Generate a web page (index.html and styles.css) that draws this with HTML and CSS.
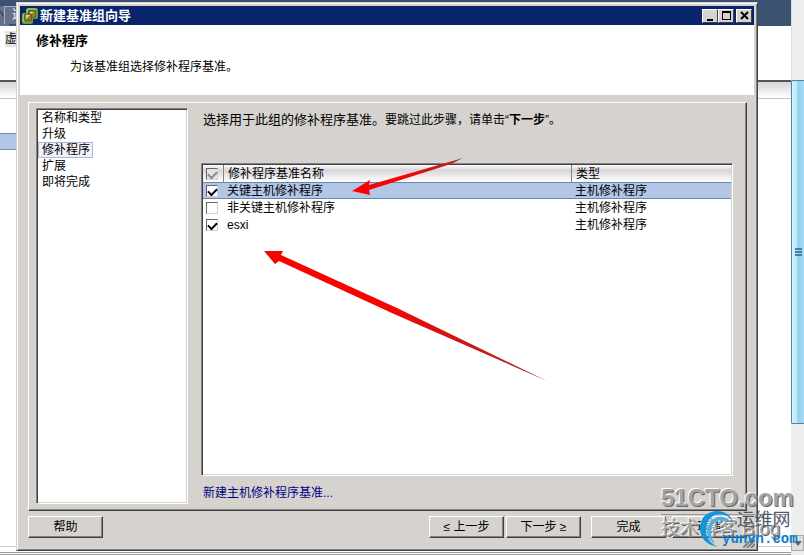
FILE: index.html
```html
<!DOCTYPE html>
<html lang="zh-CN">
	<head>
		<meta charset="utf-8">
		<title>新建基准组向导</title>
		<link rel="stylesheet" href="styles.css">
	</head>
	<body>
		<!-- 后面的主窗口 -->
		<div class="desktop">
			<div class="main">
				<div class="topbar">
					<svg width="10" height="20"><path d="M0 5l10 14" stroke="#222c3c"/></svg>
					<span class="tab">通</span>
				</div>
				<div class="toolbar"><span>虚</span></div>
				<div class="list-head"></div>
				<div class="list-body"><div class="list-row"></div></div>
				<div class="status"></div>
			</div>
			<div class="scrollbar">
				<div class="track"></div>
				<div class="thumb"><i></i><i></i><i></i></div>
				<div class="track-end"></div>
				<button class="scroll-down" aria-label="向下滚动"><svg width="8" height="5"><path d="M0 0h8L4 5z" fill="#667"/></svg></button>
			</div>
		</div>

		<!-- 向导 -->
		<div class="dialog">
			<div class="titlebar">
				<svg class="logo" width="16" height="16" viewBox="0 0 16 16">
					<path d="M6 0h8q2 0 2 2v7q0 2-2 2h-3v3q0 2-2 2H2q-2 0-2-2V7q0-2 2-2h2V2q0-2 2-2z" fill="#6a9e35"/>
					<path d="M1 14V7q0-1 1-1h3V2q0-1 1-1h8" fill="none" stroke="#b3d67c"/>
					<path d="M7 3h6v6H9v3H3V6h4z" fill="#e9cf86" stroke="#2f3d10"/>
					<path d="M8 7l4-3v4H8zM4 11l3-3h1v3z" fill="#a9741f"/>
					<path d="M6 6h3v3" fill="none" stroke="#2f3d10"/>
				</svg>
				<span class="title">新建基准组向导</span>
				<button class="win-btn" aria-label="最小化"><svg width="12" height="10"><path d="M3 8h6v2H3z"/></svg></button>
				<button class="win-btn" aria-label="最大化"><svg width="12" height="10"><path d="M2 0h9v9H2zM3 2v6h7V2z" fill-rule="evenodd"/></svg></button>
				<button class="win-btn close" aria-label="关闭"><svg width="12" height="10"><path d="M3 1l7 7M10 1l-7 7" stroke="#000" stroke-width="2"/></svg></button>
			</div>
			<div class="header">
				<h1>修补程序</h1>
				<p>为该基准组选择修补程序基准。</p>
			</div>

			<div class="panel">
				<ul class="steps">
					<li>名称和类型</li>
					<li>升级</li>
					<li class="current">修补程序</li>
					<li>扩展</li>
					<li>即将完成</li>
				</ul>
				<div class="content">
					<p class="hint"><span>选择用于此组的修补程序基准。</span>要跳过此步骤，请单击<q>下一步</q>。</p>
					<div class="grid">
						<table>
							<thead>
								<tr>
									<th class="check"><input type="checkbox" checked disabled aria-label="全选"></th>
									<th>修补程序基准名称</th>
									<th class="type">类型</th>
								</tr>
							</thead>
							<tbody>
								<tr class="selected">
									<td class="check"><input type="checkbox" id="b1" checked></td>
									<td><label for="b1">关键主机修补程序</label></td>
									<td>主机修补程序</td>
								</tr>
								<tr>
									<td class="check"><input type="checkbox" id="b2"></td>
									<td><label for="b2">非关键主机修补程序</label></td>
									<td>主机修补程序</td>
								</tr>
								<tr>
									<td class="check"><input type="checkbox" id="b3" checked></td>
									<td><label for="b3">esxi</label></td>
									<td>主机修补程序</td>
								</tr>
							</tbody>
						</table>
						<!-- 箭头标注 -->
						<svg class="arrows" width="350" height="230" viewBox="200 155 350 230">
							<defs>
								<linearGradient id="a1"><stop offset="0.4" stop-color="#f80400"/><stop offset="1" stop-color="#a82828"/></linearGradient>
							</defs>
							<path d="M352 191l18-11-1 5 94-27-12 6-82 26 1 5z" fill="url(#a1)"/>
							<path d="M264 251h19l-2 4 116 53 150 73-153-67-115-53-4 3z" fill="url(#a1)"/>
						</svg>
					</div>
					<a class="new-link" href="#">新建主机修补程序基准...</a>
				</div>
			</div>

			<div class="footer">
				<button class="btn help">帮助</button>
				<button class="btn">≤ 上一步</button>
				<button class="btn">下一步 ≥</button>
				<button class="btn finish">完成</button>
				<button class="btn cancel">取消</button>
			</div>
			<svg class="grip" width="12" height="12"><path d="M0 12L12 0M4 12l8-8M8 12l4-4" stroke="#808080" stroke-width="2"/></svg>
		</div>

		<!-- 水印 -->
		<div class="watermark">
			<div class="wm-cto">51CTO.com</div>
			<div class="wm-blog">技术博客 <span>Blog</span></div>
		</div>
		<div class="yunvn">
			<svg width="38" height="40" viewBox="0 0 38 40">
				<path d="M36 15Q32 2 18 2 2 4 2 20q1 15 18 18Q7 32 8 19 10 6 22 5q9 0 14 10z" fill="#1593dc"/>
				<path d="M33 14Q27 6 19 8 9 13 9 23q1 8 8 12-5-8-4-15 2-9 11-9 5 0 9 3z" fill="#43b4ee"/>
			</svg>
			<div class="yunvn-text">
				<span>运维网</span>
				<b>yunvn.com</b>
			</div>
		</div>
	</body>
</html>
```
FILE: styles.css
```css
* {
	box-sizing: border-box;
}

body {
	margin: 0;
	height: 100vh;
	overflow: hidden;
	position: relative;
	font: 12px/16px "Liberation Sans", "Noto Sans CJK SC", sans-serif;
	color: #000;
	background: #fff;
}

h1, p, ul {
	margin: 0;
	padding: 0;
}

button {
	font: inherit;
	color: #000;
	padding: 0;
}

/* 主窗口 */
.desktop {
	display: flex;
	height: 100%;
}

.main {
	flex: 1;
	display: flex;
	flex-direction: column;
}

.topbar {
	display: flex;
	height: 26px;
	padding-top: 6px;
	background: #3b5370;
}

.topbar svg {
	margin-right: -6px;
	background: #66718c;
}

.tab {
	width: 60px;
	height: 18px;
	padding-left: 7px;
	border-top: 1px solid #a6b0c4;
	border-left: 1px solid #a6b0c4;
	background: #66718c;
	color: #fff;
}

.toolbar {
	height: 54px;
	padding: 5px 5px;
}

.toolbar span {
	display: block;
	width: 60px;
	background: #e4e4e6;
}

.list-head {
	height: 19px;
	border-top: 2px solid #555;
	border-bottom: 1px solid #c8c4c8;
	background: linear-gradient(#d8d4d9, #fff);
}

.list-body {
	flex: 1;
	padding-top: 34px;
}

.list-row {
	width: 20px;
	height: 17px;
	border: 1px solid #6b8fb8;
	border-width: 1px 0;
	background: #b3c6e5;
}

.status {
	height: 9px;
	border-top: 1px solid #ccc;
	border-bottom: 3px double #999;
}

.scrollbar {
	width: 13px;
	display: flex;
	flex-direction: column;
	background: #eee;
}

.track {
	height: 80px;
	border-left: 1px solid #ddd;
}

.thumb {
	height: 344px;
	display: flex;
	flex-direction: column;
	justify-content: center;
	align-items: center;
	gap: 1px;
	border: 1px solid #4a86a8;
	border-right: 0;
	border-radius: 2px 0 0 2px;
	background: linear-gradient(90deg, #d9f2fc, #bfe6f8 40%, #8fd0f0 50%, #a4daf4);
}

.thumb i {
	width: 7px;
	height: 2px;
	background: #3f7fa8;
}

.track-end {
	flex: 1;
}

.scroll-down {
	display: flex;
	align-items: center;
	justify-content: center;
	height: 16px;
	margin-bottom: 4px;
	border: 1px solid #aaa;
	background: #ddd;
}

/* 向导窗口 */
.dialog {
	position: absolute;
	inset: 2px 46px 4px 16px;
	display: flex;
	flex-direction: column;
	padding: 2px;
	border: 1px solid;
	border-color: #d6d3ce #404040 #404040 #d6d3ce;
	box-shadow: inset 1px 1px #fff, inset -1px -1px #848284;
	background: #d6d3ce;
}

.titlebar {
	display: flex;
	align-items: center;
	height: 19px;
	margin: 1px 1px 0;
	padding: 0 2px;
	background: #08246b;
}

.title {
	flex: 1;
	margin-left: 2px;
	font-size: 13px;
	font-weight: bold;
	color: #fff;
}

.win-btn {
	display: flex;
	width: 16px;
	height: 14px;
	padding: 1px;
	border: 1px solid;
	border-color: #fff #404040 #404040 #fff;
	background: #d6d3ce;
}

.close {
	margin-left: 2px;
}

.header {
	height: 70px;
	margin: 0 1px;
	padding: 7px 16px;
	background: #fff;
}

.header h1 {
	font-size: 13px;
	line-height: 18px;
}

.header p {
	margin: 8px 0 0 34px;
	line-height: 18px;
}

.panel {
	flex: 1;
	display: flex;
	gap: 13px;
	margin: 7px 8px 0 9px;
	padding: 5px 13px 6px 7px;
	border: 1px solid;
	border-color: #fff #404040 #404040 #fff;
	box-shadow: inset -1px -1px #848284;
}

.steps {
	width: 152px;
	padding: 1px 1px;
	list-style: none;
	border: 1px solid;
	border-color: #848284 #fff #fff #848284;
	box-shadow: inset 1px 1px #404040, inset -1px -1px #d6d3ce;
	background: #fff;
}

.steps li {
	width: fit-content;
	padding: 0 3px 0 4px;
}

.steps .current {
	padding: 0 2px 0 3px;
	border: 1px solid #a5b7dc;
	line-height: 14px;
	background: #f0f2fa;
}

.content {
	flex: 1;
	display: flex;
	flex-direction: column;
	align-items: flex-start;
}

.hint {
	height: 55px;
	padding: 2px 0 0 2px;
	line-height: 20px;
	white-space: nowrap;
}

.hint span {
	font-size: 13px;
}

.hint q {
	quotes: "“" "”";
	font-weight: bold;
}

.hint q::before,
.hint q::after {
	font-weight: normal;
}

.grid {
	position: relative;
	flex: 1;
	align-self: stretch;
	padding: 1px;
	border: 1px solid;
	border-color: #848284 #fff #fff #848284;
	box-shadow: inset 1px 1px #404040, inset -1px -1px #d6d3ce;
	background: #fff;
}

table {
	width: 100%;
	border-collapse: separate;
	border-spacing: 0;
	table-layout: fixed;
}

th {
	height: 17px;
	padding: 0 4px;
	border-left: 1px solid #848284;
	font-weight: normal;
	text-align: left;
	background: linear-gradient(#fff, #d8d4d9 30%, #fff);
}

td {
	height: 17px;
	padding: 0 4px;
}

.check {
	width: 20px;
	padding: 0 3px;
	border-left: 0;
}

.type {
	width: 160px;
}

.selected td {
	border: 1px solid #5f88b5;
	border-width: 1px 0;
	line-height: 14px;
	background: #b3c6e5;
}

input[type="checkbox"] {
	appearance: none;
	display: block;
	width: 12px;
	height: 12px;
	margin: 0;
	border: 1px solid;
	border-color: #666 #d6d3ce #d6d3ce #666;
	background: #fff;
}

input:checked::before {
	content: "";
	display: block;
	width: 7px;
	height: 4px;
	margin: 2px 1px;
	border: 2px solid #000;
	border-width: 0 0 2px 2px;
	transform: rotate(-45deg);
}

input:disabled {
	background: #e4e2e0;
}

input:disabled::before {
	border-color: #888;
}

.arrows {
	position: absolute;
	top: -9px;
	left: -2px;
}

.new-link {
	margin: 8px 0 2px 2px;
	line-height: 18px;
	color: #000084;
	text-decoration: none;
}

/* 按钮 */
.footer {
	display: flex;
	height: 37px;
	padding: 5px 8px 0 9px;
}

.btn {
	width: 75px;
	height: 22px;
	margin-left: 2px;
	border: 1px solid;
	border-color: #fff #404040 #404040 #fff;
	box-shadow: inset -1px -1px #848284;
	background: #d6d3ce;
}

.help {
	margin: 0 auto 0 0;
}

.finish {
	margin-left: 10px;
}

.cancel {
	margin-left: 6px;
}

.grip {
	position: absolute;
	right: 2px;
	bottom: 2px;
}

/* 水印 */
.watermark {
	position: absolute;
	right: 16px;
	bottom: 12px;
	width: 127px;
	color: #a4a4a4;
	text-shadow: -1px -1px #fff, 1px 1px #666;
	white-space: nowrap;
}

.wm-cto {
	height: 34px;
	border-bottom: 1px solid #999;
	font: bold 24px/34px "Liberation Sans Narrow", "Liberation Sans", sans-serif;
}

.wm-blog {
	font-size: 19px;
	line-height: 28px;
}

.yunvn {
	position: absolute;
	right: 6px;
	bottom: 6px;
	display: flex;
	width: 100px;
}

.yunvn svg {
	flex: none;
}

.yunvn-text {
	margin-left: -14px;
	display: flex;
	flex-direction: column;
	align-items: flex-end;
}

.yunvn-text span {
	margin-right: 7px;
	font-size: 18px;
	line-height: 22px;
	color: #505868;
}

.yunvn-text b {
	font: bold 14px/16px "Liberation Mono", monospace;
	color: #0c7fd0;
}
```
